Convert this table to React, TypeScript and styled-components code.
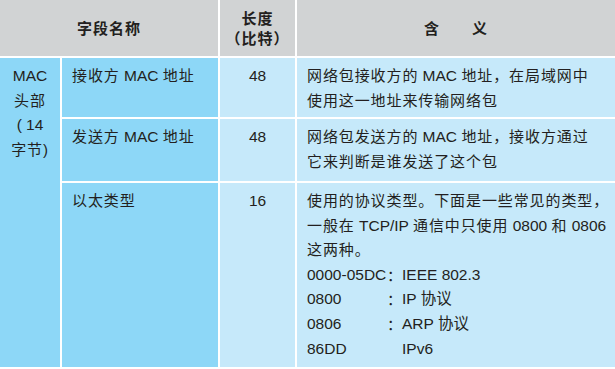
import React from 'react';
import styled, { createGlobalStyle } from 'styled-components';

const GlobalStyle = createGlobalStyle`
    html, body {
        margin: 0;
        padding: 0;
        background: #ffffff;
    }
    body {
        font-family: "Liberation Sans", "Noto Sans CJK SC", sans-serif;
        color: #231f20;
    }
`;

const HEADER_BG = '#d1d3d4';
const DARK_BLUE = '#8dd7f7';
const LIGHT_BLUE = '#c6e9fa';

const Table = styled.div`
    width: 615px;
    height: 369px;
    box-sizing: border-box;
    padding-bottom: 2px;
    display: grid;
    grid-template-columns: 60px 156px 75px 318px;
    grid-template-rows: 56px 59px 62px 1fr;
    gap: 2px;
    background: #ffffff;
`;

const HeadCell = styled.div<{ $span?: number }>`
    grid-column: span ${(p) => p.$span || 1};
    background: ${HEADER_BG};
    display: flex;
    flex-direction: column;
    align-items: center;
    justify-content: center;
    font-family: "Noto Sans CJK SC", sans-serif;
    font-weight: 700;
    font-size: 15px;
    line-height: 20px;
    letter-spacing: 1px;
    white-space: pre;
`;

const Cell = styled.div<{ $bg: string; $align?: string; $rows?: number }>`
    grid-row: span ${(p) => p.$rows || 1};
    background: ${(p) => p.$bg};
    text-align: ${(p) => p.$align || 'left'};
    padding: 6px ${(p) => (p.$align === 'center' ? '0' : '6px')} 0
        ${(p) => (p.$align === 'center' ? '0' : '10px')};
    font-size: 15px;
    line-height: 24.6px;
    letter-spacing: 0.9px;
    white-space: nowrap;
`;

const Line = styled.div``;

// latin runs are set tighter (and a touch larger) than the chinese glyphs
const Latin = styled.span`
    font-size: 15.5px;
    letter-spacing: 0;
`;

const CodeList = styled.div`
    display: grid;
    grid-template-columns: 80px 15px auto;
    font-size: 15.5px;
    letter-spacing: 0;
`;

const Colon = styled.span`
    font-family: "Noto Sans CJK SC", sans-serif;
    font-size: 15px;
`;

const mixed = (text: string) =>
    text
        .split(/([\u0020-\u024f]+)/)
        .filter((part) => part !== '')
        .map((part, i) =>
            /^[\u0020-\u024f]+$/.test(part) ? <Latin key={i}>{part}</Latin> : part
        );

const types = [
    { code: '0000-05DC', colon: true, name: 'IEEE 802.3' },
    { code: '0800', colon: true, name: 'IP 协议' },
    { code: '0806', colon: true, name: 'ARP 协议' },
    { code: '86DD', colon: false, name: 'IPv6' },
];

export default function App() {
    return (
        <>
            <GlobalStyle />
            <Table>
                <HeadCell $span={2}>字段名称</HeadCell>
                <HeadCell>
                    <Line>长度</Line>
                    <Line>（比特）</Line>
                </HeadCell>
                <HeadCell>{'含　　义'}</HeadCell>

                <Cell $bg={DARK_BLUE} $align="center" $rows={3}>
                    <Line>{mixed('MAC')}</Line>
                    <Line>头部</Line>
                    <Line>{mixed('( 14')}</Line>
                    <Line>字节)</Line>
                </Cell>
                <Cell $bg={DARK_BLUE}>{mixed('接收方 MAC 地址')}</Cell>
                <Cell $bg={LIGHT_BLUE} $align="center">{mixed('48')}</Cell>
                <Cell $bg={LIGHT_BLUE}>
                    <Line>{mixed('网络包接收方的 MAC 地址，在局域网中')}</Line>
                    <Line>使用这一地址来传输网络包</Line>
                </Cell>

                <Cell $bg={DARK_BLUE}>{mixed('发送方 MAC 地址')}</Cell>
                <Cell $bg={LIGHT_BLUE} $align="center">{mixed('48')}</Cell>
                <Cell $bg={LIGHT_BLUE}>
                    <Line>{mixed('网络包发送方的 MAC 地址，接收方通过')}</Line>
                    <Line>它来判断是谁发送了这个包</Line>
                </Cell>

                <Cell $bg={DARK_BLUE}>以太类型</Cell>
                <Cell $bg={LIGHT_BLUE} $align="center">{mixed('16')}</Cell>
                <Cell $bg={LIGHT_BLUE}>
                    <Line>使用的协议类型。下面是一些常见的类型，</Line>
                    <Line>{mixed('一般在 TCP/IP 通信中只使用 0800 和 0806')}</Line>
                    <Line>这两种。</Line>
                    <CodeList>
                        {types.map((t) => (
                            <React.Fragment key={t.code}>
                                <span>{t.code}</span>
                                <Colon>{t.colon ? '：' : ''}</Colon>
                                <span>{mixed(t.name)}</span>
                            </React.Fragment>
                        ))}
                    </CodeList>
                </Cell>
            </Table>
        </>
    );
}
